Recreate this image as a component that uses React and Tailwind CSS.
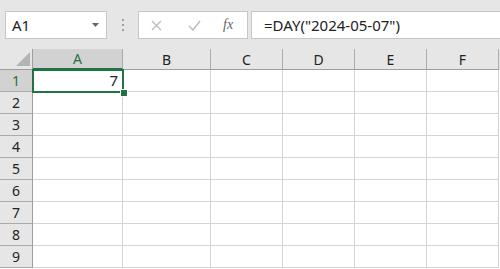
import React from "react";

const cols = [
  { l: "A", w: "w-[90px]" },
  { l: "B", w: "w-[88px]" },
  { l: "C", w: "w-[72px]" },
  { l: "D", w: "w-[72px]" },
  { l: "E", w: "w-[72px]" },
  { l: "F", w: "w-[72px]" },
];
const rows = [1, 2, 3, 4, 5, 6, 7, 8, 9];

export default function App() {
  return (
    <div className="w-[500px] h-[269px] overflow-hidden bg-white font-['Noto_Sans',sans-serif] text-[#222]">
      {/* toolbar */}
      <div className="h-[49px] bg-[#e6e6e6] flex items-start pt-[11px] pl-[5px]">
        <div className="w-[102px] h-[28px] bg-white border border-[#c6c6c6] flex items-center pl-[6px] pr-[7px]">
          <span className="text-[15px] leading-none text-[#222] flex-1">A1</span>
          <svg width="7" height="4" viewBox="0 0 7 4"><path d="M0 0h7L3.5 4z" fill="#666" /></svg>
        </div>
        <div className="w-[31px] h-[28px] flex flex-col items-center justify-center gap-[3px]">
          <div className="w-[2px] h-[2px] bg-[#a0a0a0]" />
          <div className="w-[2px] h-[2px] bg-[#a0a0a0]" />
          <div className="w-[2px] h-[2px] bg-[#a0a0a0]" />
        </div>
        <div className="w-[110px] h-[28px] bg-white border border-[#c6c6c6] flex items-center">
          <svg className="ml-[12px]" width="11" height="11" viewBox="0 0 11 11"><path d="M1 1L10 10M10 1L1 10" stroke="#bdbdbd" strokeWidth="1.4" /></svg>
          <svg className="ml-[26px]" width="13" height="11" viewBox="0 0 13 11"><path d="M1 6L5 10L12 1" stroke="#bdbdbd" strokeWidth="1.5" fill="none" /></svg>
          <span className="ml-[22px] text-[14px] italic leading-none text-[#666] font-['Liberation_Serif',serif]">fx</span>
        </div>
        <div className="ml-[3px] flex-1 h-[28px] bg-white border border-[#c6c6c6] border-r-0 flex items-center pl-[12px]">
          <span className="text-[15px] leading-none text-[#222]">=DAY("2024-05-07")</span>
        </div>
      </div>

      {/* grid */}
      <div className="relative">
        {/* header row */}
        <div className="flex h-[21px] bg-[#e6e6e6]">
          <div className="w-[33px] h-[21px] border-r border-b border-[#9e9e9e] flex items-end justify-end pr-[2px] pb-[3px]">
            <svg width="14" height="14" viewBox="0 0 14 14"><path d="M14 0V14H0z" fill="#b4b4b4" /></svg>
          </div>
          {cols.map((c, i) => (
            <div
              key={c.l}
              className={`${c.w} h-[21px] shrink-0 flex items-center justify-center text-[14px] border-r ${
                i === 0
                  ? "bg-[#d2d2d2] text-[#217346] border-b-2 border-b-[#217346] border-r-[#ababab]"
                  : "text-[#222] border-b border-b-[#9e9e9e] border-r-[#ababab]"
              }`}
            >
              {c.l}
            </div>
          ))}
        </div>
        {rows.map((r) => (
          <div key={r} className="flex h-[22px]">
            <div
              className={`w-[33px] h-[22px] shrink-0 border-r border-b border-r-[#9e9e9e] flex items-center justify-center text-[14px] ${
                r === 1 ? "bg-[#d2d2d2] text-[#217346] border-b-[#ababab]" : "bg-[#e6e6e6] text-[#222] border-b-[#ababab]"
              }`}
            >
              {r}
            </div>
            {cols.map((c) => (
              <div
                key={c.l}
                className={`${c.w} h-[22px] shrink-0 border-r border-b border-[#d4d4d4] flex items-center justify-end pr-[4px] text-[15px]`}
              >
                {r === 1 && c.l === "A" ? "7" : ""}
              </div>
            ))}
          </div>
        ))}
        {/* selection */}
        <div className="absolute left-[32px] top-[20px] w-[92px] h-[24px] border-2 border-[#217346]" />
        <div className="absolute left-[120px] top-[40px] w-[6px] h-[6px] bg-[#217346] border border-white box-content" />
      </div>
    </div>
  );
}
